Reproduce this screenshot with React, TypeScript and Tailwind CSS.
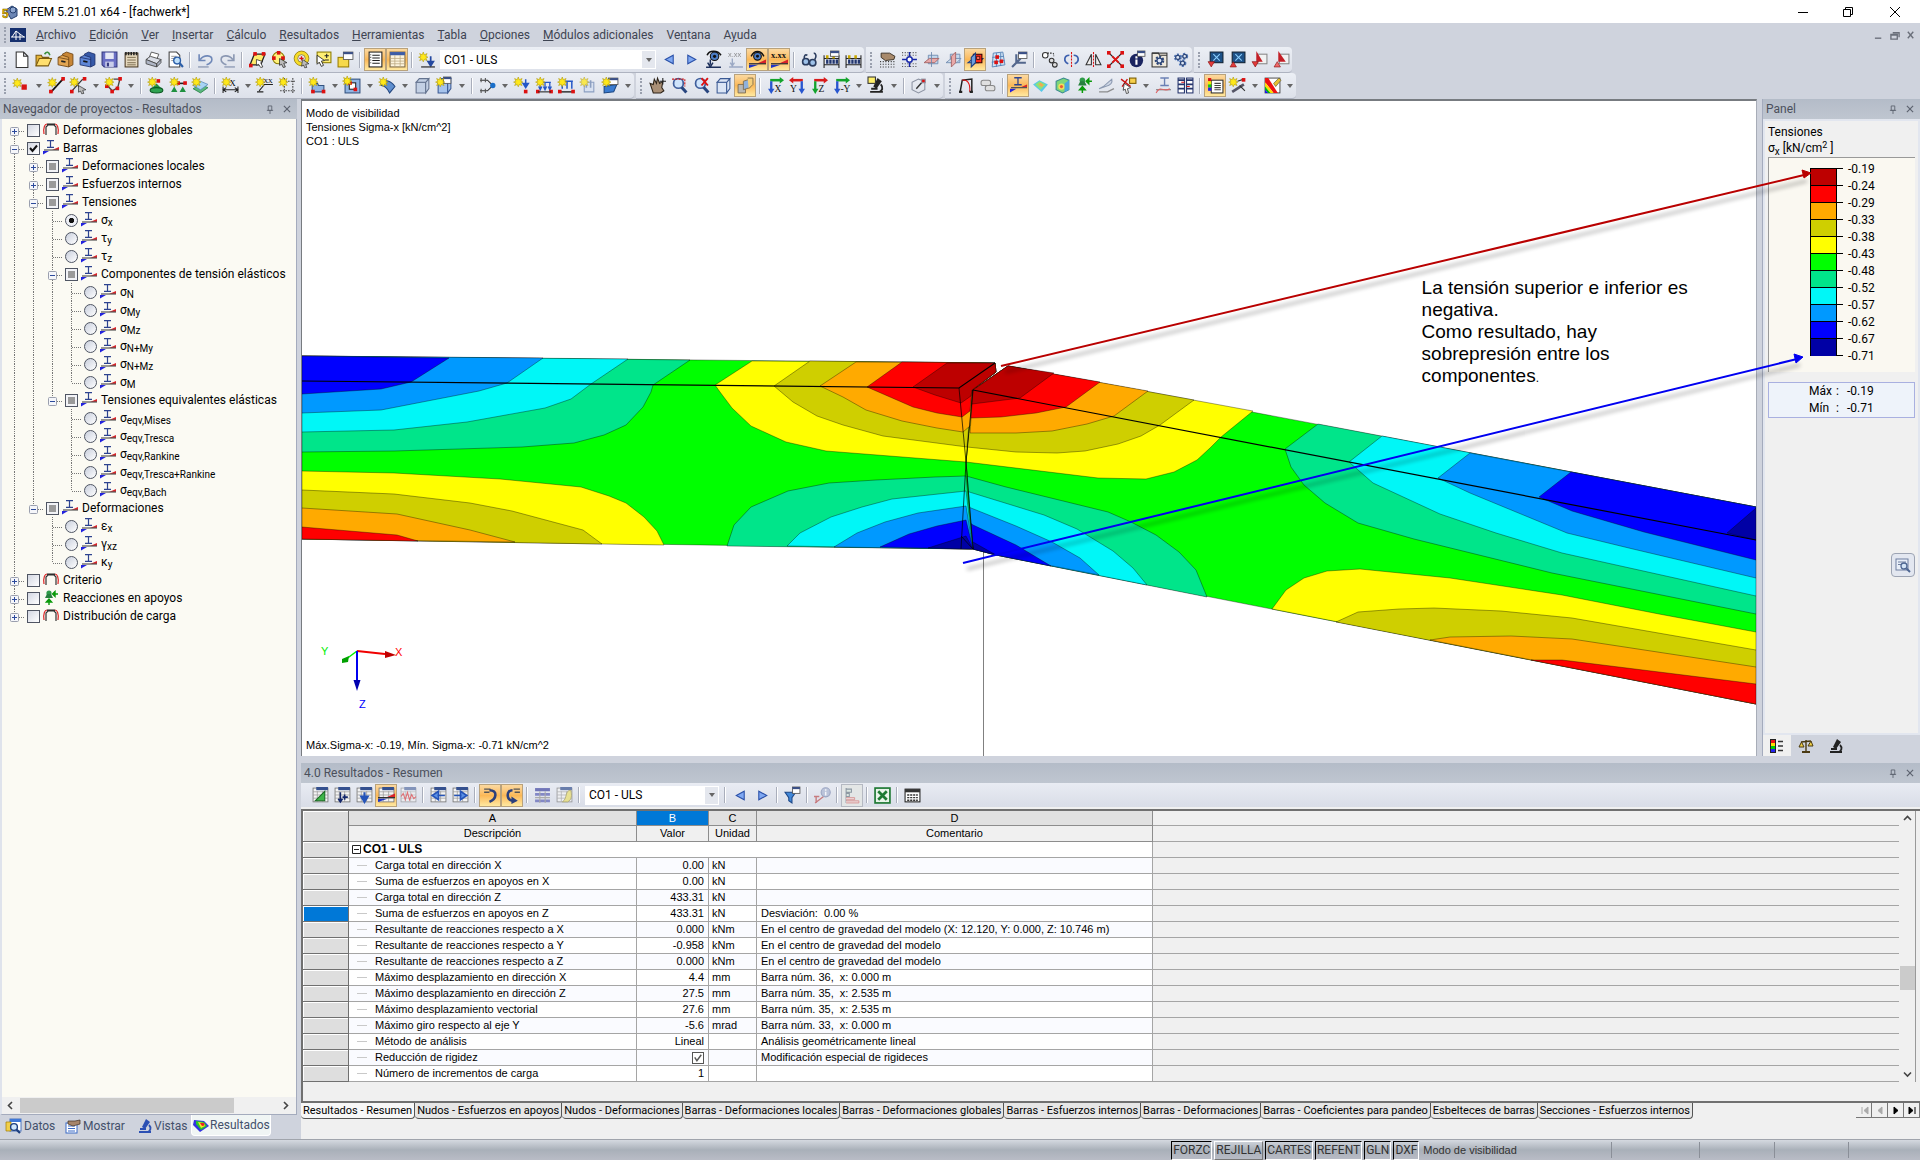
import { Fragment, useState } from 'react'
import type { ReactNode } from 'react'

const C = {
  dark: '#bd0000', red: '#ff0000', orange: '#ffaa00', olive: '#cfcf00', yellow: '#ffff00', green: '#00ff00',
  teal: '#00e58a', cyan: '#00f7f7', sky: '#0099ff', blue: '#0000ff', navy: '#0000a5',
}
const SCALE = [C.dark, C.red, C.orange, C.olive, C.yellow, C.green, C.teal, C.cyan, C.sky, C.blue, C.navy]
const LABELS = ['-0.19', '-0.24', '-0.29', '-0.33', '-0.38', '-0.43', '-0.48', '-0.52', '-0.57', '-0.62', '-0.67', '-0.71']

/* ---------- icons ---------- */

const spark = (x: number, y: number) => (
  <path d={`M${x} ${y - 4}l1 2.6 2.6-1.2-1.2 2.6 2 .8-2 .8 1.2 2.4-2.6-1-1 2.2-1-2.2-2.4 1 1.2-2.4-2.2-.8 2.2-.8-1.2-2.6 2.4 1.2z`} fill="#ffe81a" stroke="#a89200" strokeWidth=".5" />
)
const dot = (x: number, y: number, f = '#dd1111') => <rect x={x} y={y} width="3.4" height="3.4" fill={f} />
const page = (x: number, y: number, w = 7, h = 6) => (
  <g><rect x={x} y={y} width={w} height={h} fill="#fff" stroke="#555" strokeWidth=".8" /><rect x={x} y={y} width={w} height="2" fill="#3a4f86" /></g>
)
const sheet = (
  <g><rect x="1" y="1" width="14" height="13" fill="#f4f4f4" stroke="#777" strokeWidth=".8" /><path d="M1 4.5h14M1 7.5h14M1 10.5h14M5 4v10M10 4v10" stroke="#999" strokeWidth=".7" /><rect x="4" y="0" width="11" height="3" fill="#34508f" /></g>
)
const axes = (l: string, c1: string, c2: string, flip = false) => (
  <g>
    <path d={flip ? 'M13 3H3' : 'M3 3h10'} stroke={c1} strokeWidth="2.4" />
    <path d={flip ? 'M4 0v6L0 3z' : 'M12 0v6l4-3z'} fill={c1} />
    <path d={flip ? 'M12 4v8' : 'M4 4v8'} stroke={c2} strokeWidth="2.2" />
    <path d={flip ? 'M9 11h6l-3 5z' : 'M1 11h6l-3 5z'} fill={c2} />
    <text x={flip ? 1 : 7} y="14" fontSize="9" fontFamily="Liberation Serif, serif" fill="#111">{l}</text>
  </g>
)
const wedge = (y: number) => (
  <g><path d={`M7 ${y}L16 ${y - 4}v4z`} fill="#d8232a" /><path d={`M0 ${y + 1}h9L0 ${y + 4}z`} fill="#1f35c8" /><path d={`M0 ${y}h16`} stroke="#333" strokeWidth="1.2" /></g>
)
const beads = (
  <g><path d="M1 4v12M15 4v12M1 7h14M1 13h14" stroke="#222" fill="none" /><path d="M4 8v4M7 8v4M10 8v4M13 8v4" stroke="#22366f" strokeWidth="2.2" /><path d="M4 4v3M10 4v3" stroke="#c9a800" strokeWidth="2.4" /></g>
)
const cube = (f: string, s = '#3b5a94') => (
  <g fill={f} stroke={s}><path d="M2 5h9v10H2z" /><path d="M2 5l3-3.5h9L11 5zM11 5l3-3.5v9.5L11 15z" /></g>
)
const lens = <g><circle cx="7" cy="6" r="4.6" fill="#cfe4fb" stroke="#3f5e9c" strokeWidth="1.6" /><path d="M10 9.6l4.5 5" stroke="#27457f" strokeWidth="2.8" /></g>
const gear = (x: number, y: number, r: number, f = '#5177b8') => (
  <g><circle cx={x} cy={y} r={r} fill="none" stroke={f} strokeWidth={r} strokeDasharray="1.6 1.1" /><circle cx={x} cy={y} r={r * 0.8} fill="#dfe8f6" stroke="#2d4678" strokeWidth="1.2" /></g>
)
const member = <g><path d="M4 .7h7M4 7.3h7M7.5 .7v6.6" stroke="#2d4390" strokeWidth="1.2" fill="none" /><path d="M9 10L16 7v3z" fill="#d8232a" /><path d="M0 11h6L0 14.5z" fill="#2222dd" /><path d="M1 10h15" stroke="#555" strokeWidth="1.2" /></g>
const frame = <g fill="none"><path d="M3 13V5l2-2h6l2 2v8" stroke="#333" strokeWidth="1.2" /><path d="M1 12C0 5 2 2 4 2M15 12c1-7-1-10-3-10" stroke="#d22" strokeWidth="1.2" /><path d="M4 2.2h8" stroke="#222" strokeWidth="1.4" /></g>
const reaction = <g><circle cx="6" cy="3" r="2.6" fill="#2f9b4a" /><path d="M2 8l2-4h4l2 4z" fill="#27803d" /><path d="M15 4h-4M12 1.6L9.6 4 12 6.4zM6 15v-4M3.4 12L6 9l2.6 3z" stroke="#0a9a0a" strokeWidth="1.4" fill="#0a9a0a" /></g>
const microscope = (f: string) => <g><path d="M9 1l4 3-5 7-3-2z" fill={f} /><path d="M2 14h12M12 7c3 3 1 6-1 7M3 11h6" stroke={f} strokeWidth="1.8" fill="none" /></g>

const ICONS: Record<string, ReactNode> = {
  nuevo: <path d="M3 1h7l4 4v10.5H3zM10 1v4h4" fill="#fff" stroke="#333" />,
  abrir: <g><path d="M1 14V4h5l1 2h6v3" fill="#e5b53a" stroke="#7a5a10" /><path d="M1 14l3-7h11.5l-3 7z" fill="#ffdf6e" stroke="#7a5a10" /><path d="M9 3c2-3 4-2 5 1" stroke="#3c8f3c" strokeWidth="1.5" fill="none" /></g>,
  bloqueMarron: <g stroke="#6d4313" strokeWidth=".8"><path d="M5 3l4-2 6 2v10l-4 2z" fill="#c88636" /><path d="M1 6l4-2 6 2v9l-10-2z" fill="#e2a552" /><path d="M1 6l10 2" /><path d="M4 9.5l4 .8" stroke="#222" strokeWidth="1.5" /></g>,
  bloqueAzul: <g stroke="#1c2f6b" strokeWidth=".8"><path d="M5 3l4-2 6 2v10l-4 2z" fill="#3659a8" /><path d="M1 6l4-2 6 2v9l-10-2z" fill="#5e86d6" /><path d="M1 6l10 2" /><path d="M4 9.5l4 .8" stroke="#111" strokeWidth="1.5" /></g>,
  guardar: <g><path d="M1 1h14v14H3l-2-2z" fill="#6a6fc4" stroke="#35397f" /><rect x="4" y="1.5" width="8" height="6" fill="#e6e8f5" /><rect x="4" y="10" width="8" height="5" fill="#c9cdea" /><rect x="5.5" y="11" width="2" height="3.5" fill="#35397f" /></g>,
  notas: <g><rect x="2" y="2" width="12" height="13" fill="#e5d8bd" stroke="#4c3b24" /><path d="M2 2.5h12" stroke="#222" strokeWidth="3" strokeDasharray="1.5 1" /><path d="M4 6h8M4 8.5h8M4 11h8M4 13h8" stroke="#7d6d51" strokeWidth=".9" /></g>,
  imprimir: <g stroke="#444" strokeWidth=".8"><path d="M4 6l2-5 7 2-2 5z" fill="#fff" /><path d="M1 8l4-3 10 3-4 4z" fill="#d9dde6" /><path d="M1 8v4l10 3v-3zM11 12v3l4-4V8z" fill="#aeb5c5" /></g>,
  vista: <g><path d="M2 1h7l3 3v11H2z" fill="#fff" stroke="#444" /><path d="M4 5h5M4 7h5M4 9h5" stroke="#888" strokeWidth=".8" /><circle cx="9.5" cy="9" r="3.2" fill="#bfe0fa" stroke="#2b5ea8" strokeWidth="1.3" /><path d="M12 11.5l3 3.5" stroke="#2b5ea8" strokeWidth="2" /></g>,
  deshacer: <g fill="none" stroke="#6f88b8" strokeWidth="1.5"><path d="M2 3v6h6M3 8c4-5 11-4 11 0 0 2-2 4-5 5" /><path d="M1 15h10" stroke="#9aa6bd" /></g>,
  rehacer: <g fill="none" stroke="#8a97b2" strokeWidth="1.5"><path d="M14 3v6H8M13 8C9 3 2 4 2 8c0 2 2 4 5 5" /><path d="M5 15h10" stroke="#9aa6bd" /></g>,
  selPlano: <g><path d="M1 13l4-10h10l-4 10z" fill="#ffec6b" stroke="#222" strokeWidth="1.2" />{dot(0, 12)}{dot(4, 1)}{dot(12, 1)}<path d="M7 8l6 2-2 1 2 4-2 .5-2-3-2 1z" fill="#fff" stroke="#222" strokeWidth=".7" /></g>,
  selCirculo: <g><circle cx="7" cy="6.5" r="5.5" fill="#fff27c" stroke="#8a7a00" />{dot(1, 5)}{dot(5.5, 0)}{dot(9.5, 5)}<path d="M8 7l7 4-3 .5 1.5 3.5-2 .5-1.5-3-2 1z" fill="#bbb" stroke="#222" strokeWidth=".7" /></g>,
  selAnillo: <g><circle cx="8" cy="7" r="5.4" fill="none" stroke="#f7dd27" strokeWidth="3" /><circle cx="8" cy="7" r="6.9" fill="none" stroke="#8a7000" strokeWidth=".7" /><circle cx="8" cy="7" r="3.6" fill="none" stroke="#8a7000" strokeWidth=".7" /><path d="M8 5v4M6 7h4" stroke="#d11" strokeWidth="1.2" /><path d="M9 8l6 4-3 .5 1 3-2 .3-1-2.5-2 1z" fill="#bbb" stroke="#222" strokeWidth=".6" /></g>,
  selNota: <g><rect x="2" y="1" width="13" height="10" fill="#ffef73" stroke="#8c7c00" /><path d="M11 2.5v4M9 4.5h4M9 8.5h4" stroke="#222" /><path d="M2 4l7 5-3 .5 2 4-2 1-2-4-2 2z" fill="#fff" stroke="#222" strokeWidth=".8" /></g>,
  selVentana: <g><rect x="1" y="6" width="10" height="9" fill="#f6d94a" stroke="#9a7d00" />{page(6, 1, 9, 7)}</g>,
  navegador: <g><rect x="2" y="1" width="12" height="14" fill="#fff" stroke="#222" /><path d="M5 4h7M5 6.5h7M5 9h7M5 11.5h7" stroke="#222" /><path d="M3.5 3v10" stroke="#555" strokeDasharray="1 1.5" /></g>,
  tablas: <g><rect x="1" y="1" width="14" height="14" fill="#fdf4dd" stroke="#7d6b48" /><rect x="1" y="1" width="14" height="3" fill="#3e5da6" /><path d="M5.5 4v11M10.5 4v11M1 7h14M1 9.5h14M1 12h14" stroke="#b7a47d" strokeWidth=".7" /></g>,
  carga: <g>{spark(4, 5)}<path d="M11 5v7M8.5 10l2.5 4 2.5-4z" stroke="#2348a0" fill="#2348a0" strokeWidth="1.6" /><path d="M2 15h13" stroke="#333" strokeWidth="1.2" /></g>,
  anterior: <path d="M11.5 4v8L4 8z" fill="#7fa8f2" stroke="#2a50a8" />,
  siguiente: <path d="M4.5 4v8L12 8z" fill="#7fa8f2" stroke="#2a50a8" />,
  verCarga: <g><circle cx="9" cy="5" r="4" fill="#4b7cc4" stroke="#111" /><circle cx="9" cy="5" r="1.5" fill="#111" /><path d="M2 4c2-5 10-5 13 0" stroke="#111" fill="none" strokeWidth="1.5" /><path d="M5 8v5M2.5 11L5 15l2.5-4M1 15.3h14" stroke="#1c2f5b" strokeWidth="1.4" fill="none" /></g>,
  valCarga: <g opacity=".65"><text x="1" y="6" fontSize="7" fill="#555" fontFamily="Liberation Sans, sans-serif">x.xx</text><path d="M5 7v6M3 11l2 3 2-3M2 15h13" stroke="#7689ae" strokeWidth="1.3" fill="none" /></g>,
  verRes: <g><circle cx="8" cy="5" r="3.6" fill="#4b7cc4" stroke="#111" /><circle cx="8" cy="5" r="1.4" fill="#111" /><path d="M2 5c3-6 9-6 12 0" stroke="#111" fill="none" strokeWidth="1.4" />{wedge(12)}</g>,
  valRes: <g><text x="0" y="7" fontSize="8" fontWeight="bold" fill="#111" fontFamily="Liberation Serif, serif">x.xx</text>{wedge(12)}</g>,
  gafas: <g fill="none" stroke="#2b3c5e" strokeWidth="1.5"><circle cx="4.5" cy="10" r="3" fill="#9ec1e8" /><circle cx="11" cy="11" r="3" fill="#9ec1e8" /><path d="M3 7c0-3 1-4 3-3M13 8c2-3 1-6-1-6" /></g>,
  abaco: <g>{beads}{page(7, 0, 8, 5)}</g>,
  abaco2: beads,
  rejilla: <g><path d="M1 10h14M1 12.5h14M1 15h14" stroke="#333" strokeDasharray="1 1.5" /><path d="M2 2h8l5 3-1 3-8 1-4-3z" fill="#a88a6c" stroke="#2d2318" strokeWidth=".8" /></g>,
  rejillaPt: <g><path d="M1 1.5h14M1 4h14M1 12h14M1 14.5h14" stroke="#555" strokeDasharray="1 1.5" /><circle cx="8" cy="8" r="2.6" fill="#fff" stroke="#1626a8" strokeWidth="1.4" /><path d="M8 1v4M8 11v4M1 8h4M11 8h4" stroke="#1626a8" strokeWidth="1.3" /></g>,
  planoXY: <g strokeWidth=".8"><path d="M5 4h9v8H5z" fill="#c3d9ee" stroke="#6c88ae" /><path d="M1 11l5-4h9l-4 4z" fill="#e9a9a9" stroke="#a06060" /><path d="M8 1v14" stroke="#6c88ae" /></g>,
  planoYZ: <g strokeWidth=".8"><path d="M5 3h9v8H5z" fill="#c3d9ee" stroke="#6c88ae" /><path d="M1 11l5-4h9l-4 4z" fill="#d2e0ef" stroke="#6c88ae" /><path d="M6 5l4-4v10l-4 4z" fill="#e9a9a9" stroke="#a06060" /></g>,
  planoXZ: <g><path d="M1 11l5-4h9l-4 4z" fill="#a9c9ee" stroke="#1d3f80" /><path d="M6 3h8v8H6z" fill="#ff2a1a" stroke="#300" /><path d="M4 6l4-4v9l-4 4z" fill="#6e9fdc" stroke="#1d3f80" /><path d="M9 5h3v3H9z" fill="#ff6a5a" stroke="#300" strokeWidth=".7" /></g>,
  malla: <g><path d="M4 2l9-1 2 12-12 2zM3 6l11-1M2.5 10.5l12-1.5M7 2v13M11 1.5V14" fill="#cfe3f7" stroke="#5b86b8" strokeWidth=".9" />{dot(6, 4)}{dot(10, 8)}{dot(5, 9)}</g>,
  ejes: <g><path d="M5 3v8l-4 4M5 11h9M5 11l4-4" stroke="#53678d" strokeWidth="2" fill="none" />{page(7, 1, 8, 6)}</g>,
  copiar: <g fill="none" stroke="#333"><circle cx="4" cy="4" r="2.6" fill="#fff" /><circle cx="10" cy="9" r="2.2" fill="#ddd" /><circle cx="13" cy="13" r="2.2" fill="#ddd" /><path d="M6 2h4c2 0 2 1 2 3" strokeDasharray="1.5 1" /></g>,
  girar: <g><path d="M5 12C0 10 1 4 6 4M11 12c5-2 4-8-1-8" fill="none" stroke="#3c5fae" strokeWidth="1.6" /><path d="M8 1v14" stroke="#d11" strokeDasharray="2 1" /></g>,
  simetria: <g fill="none" stroke="#333"><path d="M6 3v10H1zM10 3v10h5z" fill="#eee" /><path d="M8 1v14" stroke="#d11" strokeDasharray="2 1" /></g>,
  cruzar: <g><path d="M2 2l12 12M14 2L2 14" stroke="#222" strokeWidth="1.3" /><path d="M5 5l6 6M11 5l-6 6" stroke="#e01515" strokeWidth="1.8" />{dot(0, 0)}{dot(12.6, 0)}{dot(0, 12.6)}{dot(12.6, 12.6)}</g>,
  info: <g><circle cx="7" cy="9" r="6.3" fill="#1a2460" /><path d="M7 8v5M7 5v2" stroke="#fff" strokeWidth="2" />{page(8, 0, 7, 5)}</g>,
  opciones: <g><rect x="1" y="2" width="14" height="13" fill="#efe9dc" stroke="#333" /><path d="M1 2h6l1 2h7" stroke="#333" fill="none" />{gear(8, 9, 3, '#2d4678')}</g>,
  ajustes: <g>{gear(4.5, 6, 2.5)}{gear(11, 5, 2.2)}{gear(9, 11.5, 2.4)}</g>,
  mod1: <g><rect x="3" y="1" width="12" height="10" fill="#1e5288" stroke="#123" /><path d="M6 3l6 6M12 3L6 9" stroke="#8dd0ff" /><path d="M1 10h6l-3 5z" fill="#e23b3b" stroke="#811" strokeWidth=".6" /></g>,
  mod2: <g><rect x="3" y="1" width="12" height="10" fill="#1e5288" stroke="#123" /><path d="M6 3l6 6M12 3L6 9" stroke="#8dd0ff" /><path d="M1 15h6l-3-5z" fill="#e23b3b" stroke="#811" strokeWidth=".6" /></g>,
  mod3: <g><rect x="6" y="3" width="9" height="9" fill="#f2f2f2" stroke="#888" /><path d="M5 0l6 10H5z" fill="#c41e26" /><path d="M1 10h6l-3 5z" fill="#e23b3b" stroke="#811" strokeWidth=".6" /></g>,
  mod4: <g><rect x="6" y="3" width="9" height="9" fill="#f2f2f2" stroke="#888" /><path d="M5 0l7 10H5z" fill="#c41e26" /><path d="M1 15h6l-3-5z" fill="#f06a6a" stroke="#811" strokeWidth=".6" /></g>,

  nudo: <g>{spark(4, 5)}<rect x="8" y="7" width="5" height="5" fill="#d81414" /></g>,
  linea: <g><path d="M3 14L14 2" stroke="#111" strokeWidth="1.6" />{dot(1, 12)}{dot(12.5, 0)}{spark(4, 4.5)}</g>,
  polilinea: <g><path d="M1 14L12 2M3 2l9 12" stroke="#333" strokeWidth="1.2" /><path d="M8 8l7 4-3 .5 1 3-2 .3-1-2.5-2 1z" fill="#bbb" stroke="#222" strokeWidth=".6" />{dot(0, 12)}{dot(12, 0)}{spark(4, 4)}</g>,
  arco: <g><path d="M2 8l5 5 5-3 2-8H8" stroke="#444" fill="none" strokeWidth="1.3" />{dot(0, 7)}{dot(5, 12)}{dot(10, 9)}{dot(12.5, 0)}{spark(4, 4)}</g>,
  apoyo: <g><path d="M8 6l5 5H3z" fill="#1f9140" /><ellipse cx="8" cy="12.5" rx="6" ry="2.5" fill="#2fa351" stroke="#0b5a22" />{dot(8, 2)}{spark(4, 4)}</g>,
  apoyoLinea: <g><path d="M3 6h11" stroke="#222" strokeWidth="1.5" />{dot(6, 4)}{dot(12.5, 4)}<path d="M4 9l3 5H1zM12 9l3 5H9z" fill="#1f9140" />{spark(4, 4)}</g>,
  apoyoSup: <g><path d="M1 11l7-4 7 3-7 5z" fill="#5bb87c" stroke="#1e7a40" strokeWidth=".7" /><path d="M1 8l7-4 7 3-7 5z" fill="#a8d4f4" stroke="#5184b4" strokeWidth=".7" />{spark(4, 4)}</g>,
  cota: <g><path d="M1 9v6M15 9v6M1 12h14M4 10l-3 2 3 2M12 10l3 2-3 2" stroke="#222" fill="none" /><text x="7" y="8" fontSize="8" fontFamily="Liberation Serif, serif">X</text>{spark(4, 4)}</g>,
  texto: <g><path d="M2 13l5-6h8M0 14h6" stroke="#222" fill="none" /><text x="6" y="6" fontSize="6" fontFamily="Liberation Serif, serif">XX</text>{spark(3, 4)}</g>,
  linGuia: <g><path d="M5 1v14M13 1v14M1 4h14M1 13h14" stroke="#444" strokeDasharray="1.5 1" />{spark(4, 4)}</g>,
  superficie: <g><path d="M3 6h5l1 2h5v6H3z" fill="#90b4e2" stroke="#33527f" />{dot(12, 12)}{dot(2, 12)}{spark(4, 4)}</g>,
  abertura: <g><rect x="1" y="2" width="14" height="13" fill="#90b4e2" stroke="#33527f" /><rect x="5" y="5.5" width="6" height="6" fill="#fff" stroke="#222" />{dot(4, 4)}{dot(9, 10)}{spark(3, 3)}</g>,
  curva: <g><path d="M2 6c4-4 9-3 13 3l-5 6C8 11 5 8 2 8z" fill="#5f8fcf" stroke="#24477f" />{spark(4, 4)}</g>,
  solido: cube('#c3d0e4', '#64738f'),
  solidoNuevo: <g>{cube('#a6c3ec')}{page(7, 0, 7, 6)}{spark(4, 4)}</g>,
  conexion: <g><path d="M1 3h7l5 5-5 5H1" stroke="#333" fill="none" /><path d="M2 1v4M6 1v4M2 11v4M6 11v4" stroke="#555" /><circle cx="13" cy="8" r="2.5" fill="#1b6fc9" /></g>,
  cargaNudo: <g>{spark(4, 4)}<path d="M11 2v6M8.5 6l2.5 4 2.5-4z" stroke="#2557c7" fill="#2557c7" strokeWidth="1.4" />{dot(9.3, 12)}</g>,
  cargaBarra: <g><path d="M3 5h11M4 5v6M8.5 5v6M13 5v6M2.5 9L4 12l1.5-3M7 9l1.5 3L10 9M11.5 9l1.5 3 1.5-3" stroke="#2557c7" fill="none" strokeWidth="1.2" />{dot(0, 12)}{dot(12.5, 12)}<path d="M2 14h12" stroke="#222" />{spark(4, 4)}</g>,
  cargaLinea: <g><path d="M3 4h11M4 4v7M8.5 4v7M13 4v7" stroke="#2557c7" strokeWidth="1.4" /><path d="M2 14h12" stroke="#222" strokeWidth="1.3" />{dot(0, 12)}{dot(12.5, 12)}{spark(4, 4)}</g>,
  cargaSup: <g opacity=".75"><path d="M4 5h9v9H4z" fill="#d5e0f2" stroke="#6f87b2" /><path d="M6 3v7M10 3v7" stroke="#6f87b2" strokeWidth="1.5" />{spark(4, 4)}</g>,
  cargaGen: <g><path d="M2 9l12-2-3 7-9 1z" fill="#3b7cd0" stroke="#1c467f" />{page(6, 1, 9, 6)}{spark(4, 4)}</g>,
  mano: <g><path d="M4 15L1 6l3 1 1-5 2 4 1-5 2 5 3-2-1 6 2 3-3 2z" fill="#a98f76" stroke="#2d2318" /><path d="M13 1v6M10 4h6" stroke="#222" /></g>,
  zoomVent: <g>{lens}<path d="M1 2h12v7" fill="none" stroke="#c11" strokeDasharray="2 1" /></g>,
  zoomX: <g>{lens}<path d="M8 1l6 7M14 1L8 8" stroke="#d11" strokeWidth="1.8" /></g>,
  cubo: cube('#dbe5f5'),
  perspectiva: <g stroke="#7c6a4a" strokeWidth=".8"><path d="M1 7h7v8H1z" fill="#b9b7b3" /><path d="M6 4l6-2v8l-6 2z" fill="#8fb1dc" /><path d="M10 1h5v6l-4 4" fill="#f6cf7b" /></g>,
  vistaX: axes('X', '#13a32c', '#2856cf'),
  vistaY: axes('Y', '#d81b1b', '#2856cf', true),
  vistaZ: axes('Z', '#d81b1b', '#13a32c'),
  vistaMY: axes('-Y', '#13a32c', '#2856cf'),
  microVista: <g>{microscope('#222')}<rect x="0" y="0" width="7" height="6" fill="#fff06a" stroke="#333" /></g>,
  recorte: <g fill="none" stroke="#8d94a3"><path d="M1 5l6-3 6 2v8l-6 3-6-3z" /><path d="M5 11l7-8" stroke="#333" strokeWidth="1.3" />{dot(10, 2)}</g>,
  marco: <g><path d="M2 14L4 3l9-1v12" fill="none" stroke="#222" strokeWidth="1.4" /><path d="M4 3c4-1 8 2 7 11" fill="none" stroke="#d11" /><path d="M1 14h3M11 14h3" stroke="#222" strokeWidth="2" /></g>,
  tubos: <g fill="#e0e0e0" stroke="#888"><rect x="1" y="3" width="9" height="5" rx="2" /><rect x="5" y="8" width="9" height="5" rx="2" /></g>,
  barra: member,
  isoSup: <g><path d="M1 7l6-4 8 4-6 7z" fill="#58c8e8" /><path d="M3 7l4-3 6 3-5 5z" fill="#8be27a" /><path d="M6 7l2-1.5 3 2-2 2z" fill="#f4a850" /></g>,
  isoSol: <g><path d="M2 4l7-3 5 2v9l-6 3-6-3z" fill="#7ed67a" stroke="#3b8a90" /><circle cx="7" cy="9" r="3" fill="#f0e05a" /><circle cx="7" cy="9" r="1.5" fill="#e85a3a" /><path d="M10 6l4-3v9l-4 2z" fill="#4aa6e0" /></g>,
  reaccion: reaction,
  seccion: <g opacity=".8"><path d="M1 11l4-2L13 2c1 4-2 6-6 7z" fill="#c9d3e4" stroke="#7787a3" /><path d="M1 14h8l6-3" stroke="#777" strokeWidth="1.3" fill="none" /></g>,
  seleccion: <g><path d="M1 2l9 7M7 2L2 9" stroke="#c11" strokeWidth="1.3" /><path d="M4 6l6 4-3 1 1 4-2 .5-1-4-2 1z" fill="#fff" stroke="#222" strokeWidth=".7" /><rect x="9" y="1" width="6" height="5" fill="#f6cf4b" stroke="#7a5c00" /></g>,
  distrib: <g opacity=".8"><path d="M5 1h8M5 8h8M9 1v7" stroke="#4d67a6" strokeWidth="1.3" /><path d="M1 12h14" stroke="#555" /><path d="M1 15c4-8 7 0 13-4" stroke="#d44" fill="none" /></g>,
  tablaRes: <g><rect x="1" y="1" width="6" height="14" fill="#fff" stroke="#24346c" /><rect x="9" y="1" width="6" height="14" fill="#fff" stroke="#24346c" /><path d="M1 3h6M9 3h6M1 7h6M9 7h6M1 11h6M9 11h6" stroke="#24346c" strokeWidth="1.6" /><path d="M4 5h3M9 9h3" stroke="#d11" /></g>,
  panelColor: <g><rect x="4" y="3" width="11" height="12" fill="#fff" stroke="#333" /><path d="M7 6h6M7 8h6M7 10h6M7 12h6" stroke="#444" /><rect x="1" y="1" width="3" height="3" fill="#d11" /><rect x="1" y="4" width="3" height="3" fill="#ee0" /><rect x="1" y="7" width="3" height="3" fill="#1c1" /><rect x="1" y="10" width="3" height="3" fill="#22e" /></g>,
  varita: <g><path d="M3 14L14 7" stroke="#556" strokeWidth="2.6" /><path d="M8 4l6-2M10 8l5 5" stroke="#333" />{spark(4, 4)}{dot(12, 1)}</g>,
  colores: <g><rect x="1" y="1" width="14" height="14" fill="#fff" stroke="#333" strokeWidth=".8" /><path d="M1 1h3l9 14H9L1 5z" fill="#e11" /><path d="M1 5l8 10H6L1 9z" fill="#fd0" /><path d="M1 9l5 6H4l-3-3z" fill="#0b0" /><path d="M1 12l3 3H1z" fill="#11e" /><path d="M9 6l5-5 2 2-5 6z" fill="#e8c132" stroke="#553" strokeWidth=".6" /></g>,

  tEditar: <g>{sheet}<path d="M3 13L12 4v9z" fill="#3fb649" stroke="#1b6d25" /></g>,
  tOrden: <g>{sheet}<path d="M6 5v8M4 11l2 3 2-3M10 7v5M8 9.5h5" stroke="#13276b" fill="none" strokeWidth="1.5" /></g>,
  tBajar: <g>{sheet}<path d="M8 5v5M5 9h6l-3 5z" stroke="#2554b8" fill="#2554b8" strokeWidth="2" /></g>,
  tResult: <g>{sheet}{wedge(10)}</g>,
  tGrafico: <g opacity=".55">{sheet}<path d="M1 9l2-3 2 6 2-7 2 7 2-5 2 4 2-2" stroke="#d11" fill="none" /></g>,
  tIzq: <g>{sheet}<path d="M14 8H7M8 4L2 8l6 4z" stroke="#2554b8" fill="#5a90e6" strokeWidth="1.5" /></g>,
  tDer: <g>{sheet}<path d="M2 8h7M8 4l6 4-6 4z" stroke="#2554b8" fill="#5a90e6" strokeWidth="1.5" /></g>,
  tSync1: <g><path d="M2 2h6M2 5h5" stroke="#555" strokeWidth="1.4" /><path d="M7 3c8 0 7 8 0 11" fill="none" stroke="#2b3f7c" strokeWidth="2.4" /></g>,
  tSync2: <g><path d="M9 2h6M10 5h5" stroke="#555" strokeWidth="1.4" /><path d="M8 3C2 3 2 12 8 13" fill="none" stroke="#2b3f7c" strokeWidth="2.4" /><path d="M7 9l6 4-6 3z" fill="#2b3f7c" /></g>,
  tFilas: <g><rect x="1" y="1" width="14" height="3" fill="#7176b8" /><path d="M1 7h14M1 13h14" stroke="#8388c6" strokeWidth="2.6" /><path d="M1 10h14M5.5 4v11M10.5 4v11" stroke="#aaa" /></g>,
  tColor: <g opacity=".7">{sheet}<path d="M14 3c-6 0-3 8-8 11h5c4-2 4-6 3-11z" fill="#ece06c" stroke="#8d8440" strokeWidth=".7" /></g>,
  tFiltro: <g><path d="M1 5h10L7.5 10v5l-3-2v-3z" fill="#4288d8" stroke="#1c4787" />{page(8, 0, 7, 6)}</g>,
  tInfo: <g opacity=".65"><path d="M2 15V9M0 9h5M1 15l8-6" stroke="#b44" fill="none" strokeWidth="1.3" /><circle cx="11" cy="5" r="4.3" fill="#a5b1cf" stroke="#7583ab" /><path d="M11 4.5v3.5M11 2v1.5" stroke="#fff" strokeWidth="1.4" /></g>,
  tHist: <g opacity=".6"><path d="M2 1v14M2 2h5v3H2M2 6h3v3H2" fill="#d9eadf" stroke="#567" /><path d="M2 10h8v2H2M2 13h12v2H2" fill="#f4d4d4" stroke="#c55" strokeWidth=".8" /></g>,
  tExcel: <g><rect x="1" y="1" width="14" height="14" fill="#e9f5ea" stroke="#207a35" strokeWidth="1.6" /><path d="M4 4l8 8M12 4l-8 8" stroke="#1d7a32" strokeWidth="2.6" /></g>,
  tCalc: <g><rect x="1" y="2" width="14" height="12" fill="#fff" stroke="#222" /><rect x="1" y="2" width="14" height="3" fill="#333" /><path d="M3 7.5h10M3 10h10M3 12.5h10" stroke="#333" strokeWidth="1.4" strokeDasharray="2 .8" /></g>,

  datos: <g><rect x="4" y="1" width="11" height="12" fill="#fff" stroke="#4c74bd" /><rect x="4" y="1" width="11" height="3" fill="#3e78d8" /><path d="M0 4h5v9H0z" fill="#f1cf4a" stroke="#a07b00" strokeWidth=".7" /><circle cx="8" cy="9" r="3.4" fill="#cfe6fb" stroke="#1d3f80" strokeWidth="1.4" /><path d="M10.5 11.5l3.5 3.5" stroke="#1d3f80" strokeWidth="2.2" /></g>,
  mostrar: <g><rect x="1" y="5" width="11" height="10" fill="#fff" stroke="#3b6bc6" /><path d="M3 8h7M3 10.5h7M3 13h7" stroke="#3b6bc6" /><path d="M3 3h7l5-1v4l-7 2-5-2z" fill="#a78569" stroke="#402e1f" strokeWidth=".7" /></g>,
  vistas: microscope('#2c50b4'),
  filtro: microscope('#222'),
  resultados: <g><path d="M1 3l10 1 5 5-9 6L0 8z" fill="#3434e0" /><path d="M3 4l8 1 3 4-6 4-5-6z" fill="#28c828" /><path d="M5 5l6 1 1 3-4 2z" fill="#f3e82a" /><path d="M7 6h4l.5 2.5-2.5.5z" fill="#e22" /></g>,
  deform: frame,
  balanza: <g fill="none" stroke="#4a3a12"><path d="M8 2v11M3 4l10-1M4 14h8" strokeWidth="1.4" /><path d="M1 9l2.5-5L6 9zM10 8l3-5 2 5z" fill="#f0cf45" /><path d="M4 14h8" strokeWidth="2" /></g>,
  escala: <g><rect x="1" y="1" width="6" height="14" fill="#222" /><rect x="2" y="2" width="4" height="3" fill="#e11" /><rect x="2" y="5" width="4" height="3" fill="#fd0" /><rect x="2" y="8" width="4" height="3" fill="#0c0" /><rect x="2" y="11" width="4" height="3" fill="#22e" /><path d="M9 3.5h5M9 8h5M9 12.5h5" stroke="#333" strokeWidth="1.6" /></g>,
  buscar: <g><rect x="1" y="2" width="12" height="11" fill="#e8eef8" stroke="#6f7f9f" /><path d="M3 5h8M3 7.5h4" stroke="#6f7f9f" /><circle cx="9" cy="9" r="3" fill="#d4e4f6" stroke="#4d6692" strokeWidth="1.3" /><path d="M11.5 11.5L15 15" stroke="#4d6692" strokeWidth="2" /></g>,
}

function Icon({ name, className = 'size-4' }: { name: string; className?: string }) {
  return <svg viewBox="0 0 16 16" className={`${className} shrink-0 overflow-visible`} aria-hidden="true">{ICONS[name]}</svg>
}

/* ---------- toolbars ---------- */
// '|' separator, '!' suffix pressed, '~' framed, '+' has a drop-down, '=' load case combo

const ROW1 = [
  'nuevo abrir bloqueMarron bloqueAzul guardar notas imprimir vista | deshacer rehacer | selPlano selCirculo selAnillo selNota selVentana | navegador! tablas! | carga = anterior siguiente verCarga valCarga verRes! valRes! | gafas abaco abaco2',
  'rejilla rejillaPt planoXY planoYZ planoXZ! malla ejes | copiar girar simetria cruzar info opciones ajustes',
  'mod1 mod2 mod3 mod4',
]
const ROW2 = [
  'nudo+ linea polilinea+ arco+ | apoyo apoyoLinea apoyoSup | cota+ texto linGuia | superficie+ abertura+ curva+ solido solidoNuevo+ | conexion+ cargaNudo cargaBarra cargaLinea cargaSup cargaGen+',
  'mano zoomVent zoomX cubo perspectiva! | vistaX vistaY vistaZ vistaMY+ microVista+ | recorte+',
  'marco tubos | barra! isoSup isoSol reaccion seccion seleccion+ distrib tablaRes | panelColor! varita+ colores+',
]
const TABLE_BAR = 'tEditar tOrden tBajar tResult! tGrafico | tIzq tDer | tSync1! tSync2! | tFilas tColor | = | anterior siguiente | tFiltro | tInfo | tHist~ | tExcel | tCalc'

function Combo({ wide }: { wide: boolean }) {
  return (
    <div className={`mx-[2px] flex h-[19px] bg-white ${wide ? 'w-[216px]' : 'w-[134px]'}`}>
      <select aria-label="Caso de carga" className="flex-1 appearance-none bg-white pl-1 text-[12px] leading-[18px] text-black outline-none">
        <option>CO1 - ULS</option>
      </select>
      <span className="flex w-[15px] items-center justify-center border border-white bg-[#e4e7ee]"><Caret /></span>
    </div>
  )
}

function Caret() {
  return <svg viewBox="0 0 6 4" className="h-1 w-[6px]"><path d="M0 0h6L3 4z" fill="#666" /></svg>
}

function Tools({ spec, wide = true }: { spec: string; wide?: boolean }) {
  return (
    <>
      {spec.split(' ').map((raw, i) => {
        if (raw === '|') return <span key={i} className="mx-[3px] h-4 w-[2px] shrink-0 border-l border-[#a9aebb] bg-white" />
        if (raw === '=') return <Combo key={i} wide={wide} />
        const name = raw.replace(/[!+~]/, '')
        const look = raw.endsWith('!') ? 'border-[#b9a27c] bg-linear-to-b from-[#fbd9a0] via-[#fbb857] to-[#ffe9a0]' : raw.endsWith('~') ? 'border-[#b5b9c2] bg-[#e3e6e6]' : 'border-transparent'
        return (
          <Fragment key={i}>
            <button type="button" aria-label={name} className={`flex h-[23px] w-[22px] shrink-0 items-center justify-center border ${look}`}><Icon name={name} className="size-[17px]" /></button>
            {raw.endsWith('+') && <button type="button" aria-label={`${name} menú`} className="flex h-[23px] w-[13px] shrink-0 items-center justify-center"><Caret /></button>}
          </Fragment>
        )
      })}
    </>
  )
}

function ToolRow({ groups }: { groups: string[] }) {
  return (
    <div className="flex h-[26px] gap-[2px]">
      {groups.map(g => (
        <div key={g} className="flex items-center rounded-r border-b border-[#aeb3c0] bg-linear-to-b from-[#eceff5] to-[#dde1ea]">
          <span className="ml-1 mr-[3px] h-4 w-[3px] border-l-2 border-dotted border-[#9aa0ae]" />
          <Tools spec={g} />
        </div>
      ))}
    </div>
  )
}

/* ---------- navigator ---------- */

type Node = { l: number; t: string; s?: string; c: 'box' | 'on' | 'part' | 'radio'; e?: '+' | '-'; i?: string }

const TREE: Node[] = [
  { l: 0, t: 'Deformaciones globales', c: 'box', e: '+', i: 'deform' },
  { l: 0, t: 'Barras', c: 'on', e: '-' },
  { l: 1, t: 'Deformaciones locales', c: 'part', e: '+' },
  { l: 1, t: 'Esfuerzos internos', c: 'part', e: '+' },
  { l: 1, t: 'Tensiones', c: 'part', e: '-' },
  { l: 2, t: 'σ', s: 'x', c: 'radio' },
  { l: 2, t: 'τ', s: 'y', c: 'radio' },
  { l: 2, t: 'τ', s: 'z', c: 'radio' },
  { l: 2, t: 'Componentes de tensión elásticos', c: 'part', e: '-' },
  { l: 3, t: 'σ', s: 'N', c: 'radio' },
  { l: 3, t: 'σ', s: 'My', c: 'radio' },
  { l: 3, t: 'σ', s: 'Mz', c: 'radio' },
  { l: 3, t: 'σ', s: 'N+My', c: 'radio' },
  { l: 3, t: 'σ', s: 'N+Mz', c: 'radio' },
  { l: 3, t: 'σ', s: 'M', c: 'radio' },
  { l: 2, t: 'Tensiones equivalentes elásticas', c: 'part', e: '-' },
  { l: 3, t: 'σ', s: 'eqv,Mises', c: 'radio' },
  { l: 3, t: 'σ', s: 'eqv,Tresca', c: 'radio' },
  { l: 3, t: 'σ', s: 'eqv,Rankine', c: 'radio' },
  { l: 3, t: 'σ', s: 'eqv,Tresca+Rankine', c: 'radio' },
  { l: 3, t: 'σ', s: 'eqv,Bach', c: 'radio' },
  { l: 1, t: 'Deformaciones', c: 'part', e: '-' },
  { l: 2, t: 'ε', s: 'x', c: 'radio' },
  { l: 2, t: 'γ', s: 'xz', c: 'radio' },
  { l: 2, t: 'κ', s: 'y', c: 'radio' },
  { l: 0, t: 'Criterio', c: 'box', e: '+', i: 'deform' },
  { l: 0, t: 'Reacciones en apoyos', c: 'box', e: '+', i: 'reaccion' },
  { l: 0, t: 'Distribución de carga', c: 'box', e: '+', i: 'deform' },
]

// does the branch line of column `col` go on below row `i`
const goesOn = (i: number, col: number) => {
  for (let k = i + 1; k < TREE.length; k++) {
    if (TREE[k].l < col) return false
    if (TREE[k].l === col) return true
  }
  return false
}

function Branch({ i, col }: { i: number; col: number }) {
  const n = TREE[i]
  const own = col === n.l
  const down = goesOn(i, col)
  return (
    <svg viewBox="0 0 19 18" className="h-[18px] w-[19px] shrink-0">
      <g stroke="#777" strokeDasharray="1 1" fill="none">
        {(own ? i > 0 : down) && <path d="M9.5 0v9" />}
        {down && <path d="M9.5 9v9" />}
        {own && <path d="M10 10.5h10" />}
      </g>
      {own && n.e && (
        <g><rect x="5.5" y="6.5" width="8" height="8" rx="1" fill="#f5f6fa" stroke="#9a9fae" /><path d={n.e === '+' ? 'M7 10.5h5M9.5 8v5' : 'M7 10.5h5'} stroke="#2c4a9c" /></g>
      )}
    </svg>
  )
}

function TreeRow({ i, picked, onPick }: { i: number; picked: number; onPick: (i: number) => void }) {
  const n = TREE[i]
  const cols = Array.from({ length: n.l }, (_, k) => k)
  return (
    <li className="flex h-[18px] items-center pl-[5px]">
      {cols.map(k => <Branch key={k} i={i} col={k} />)}
      {n.e ? <button type="button" aria-label={n.t} className="flex"><Branch i={i} col={n.l} /></button> : <Branch i={i} col={n.l} />}
      <label className="flex items-center whitespace-nowrap">
        <span className="ml-[3px] grid size-[13px] shrink-0">
          {n.c === 'radio'
            ? <input type="radio" name="res" checked={picked === i} onChange={() => onPick(i)} className={`[grid-area:1/1] size-[13px] appearance-none rounded-full border border-[#4f5563] ${picked === i ? 'bg-[radial-gradient(circle,#111_0_30%,#eef0f6_38%)]' : 'bg-linear-to-br from-[#c9cfdd] to-white'}`} />
            : <input type="checkbox" defaultChecked={n.c === 'on'} className={`[grid-area:1/1] size-[13px] appearance-none border border-[#4f5563] ${n.c === 'part' ? 'bg-[#9a9a9a] shadow-[inset_0_0_0_2px_#f2f3f7]' : 'bg-linear-to-br from-[#d3d7e2] to-white'}`} />}
          {n.c === 'on' && <svg viewBox="0 0 13 13" className="pointer-events-none [grid-area:1/1]"><path d="M3 6l2.5 3L10 3.5" fill="none" stroke="#111" strokeWidth="2" /></svg>}
        </span>
        <Icon name={n.i ?? 'barra'} className="ml-[3px] size-4" />
        <span className="ml-1 text-[12px] leading-[18px]">{n.t}{n.s && <span className="relative top-[2px] text-[10px]">{n.s}</span>}</span>
      </label>
    </li>
  )
}

function PanelTitle({ text }: { text: string }) {
  return (
    <div className="flex h-5 shrink-0 items-center bg-linear-to-b from-[#b4bcc8] to-[#bfc6d0] pl-[3px] pr-[6px] text-[12px] text-[#4b505c]">
      <h2 className="flex-1">{text}</h2>
      <button type="button" aria-label="Fijar" className="mr-[9px]"><svg viewBox="0 0 9 10" className="h-[9px] w-2"><path d="M2.5 1h4v5h-4zM1 6h7M4.5 6v4" fill="none" stroke="#5d6370" /></svg></button>
      <button type="button" aria-label="Cerrar"><svg viewBox="0 0 9 9" className="size-2"><path d="M1 1l7 7M8 1L1 8" stroke="#5d6370" strokeWidth="1.3" /></svg></button>
    </div>
  )
}

function Navigator() {
  const [picked, setPicked] = useState(5)
  return (
    <aside className="flex w-[297px] shrink-0 flex-col">
      <PanelTitle text="Navegador de proyectos - Resultados" />
      <div className="flex flex-1 flex-col border-b border-l-2 border-r border-[#a4abbd] border-l-[#dfe3ec] bg-[#fbfaf3]">
        <ul className="-ml-[2px] flex-1 pt-[2px]">
          {TREE.map((_, i) => <TreeRow key={i} i={i} picked={picked} onPick={setPicked} />)}
        </ul>
        <div className="flex h-[17px] items-center bg-[#f0f0f0]">
          <button type="button" aria-label="Izquierda" className="flex w-[18px] justify-center"><Chevron d="M5 1L1.5 4.5L5 8" /></button>
          <div className="h-[15px] w-[214px] bg-[#cbcbcb]" />
          <button type="button" aria-label="Derecha" className="ml-auto flex w-[18px] justify-center"><Chevron d="M1 1l3.5 3.5L1 8" /></button>
        </div>
      </div>
      <div className="flex h-[24px] items-start gap-1 bg-[#cfd3dd] pl-[6px] text-[12px] text-[#43506b]">
        <button type="button" className="flex h-[21px] w-[55px] items-center gap-[2px]"><Icon name="datos" />Datos</button>
        <button type="button" className="flex h-[21px] w-[68px] items-center gap-[2px]"><Icon name="mostrar" />Mostrar</button>
        <button type="button" className="flex h-[21px] w-[50px] items-center gap-px"><Icon name="vistas" />Vistas</button>
        <button type="button" className="flex h-[21px] w-[80px] items-center gap-px rounded-b-sm border border-t-0 border-white bg-[#f0f5f4] pl-px"><Icon name="resultados" />Resultados</button>
      </div>
    </aside>
  )
}

function Chevron({ d }: { d: string }) {
  return <svg viewBox="0 0 9 9" className="size-[9px]"><path d={d} fill="none" stroke="#444" strokeWidth="1.6" /></svg>
}

/* ---------- model view ---------- */

type Shape = [string, string]

// bands of both beams, painted from the middle outwards
const LEFT: Shape[] = [
  [C.green, 'M302 356L995 363L996 372L972 390L966 462L973 549L302 539Z'],
  [C.teal, 'M302 356L690 360L653 385L651 392L643 407L626 425L604 435L574 443L522 447L394 451L302 452Z'],
  [C.cyan, 'M302 356L628 359L591 384L571 399L545 408L467 422L394 430L302 432Z'],
  [C.sky, 'M302 356L543 358L507 383L479 391L381 410L302 413Z'],
  [C.blue, 'M302 356L449 358L411 382L381 389L302 394Z'],
  [C.yellow, 'M302 471L394 473L500 479L581 487L609 496L626 503L644 517L657 531L664 545L302 539Z'],
  [C.olive, 'M302 490L394 494L470 503L512 511L583 530L602 544L302 539Z'],
  [C.orange, 'M302 508L397 514L470 530L515 542L302 539Z'],
  [C.red, 'M302 527L397 535L418 541L302 539Z'],
  [C.yellow, 'M752 361L995 363L996 372L972 390L966 462L826 451L786 442L751 426L732 408L720 392L715 385Z'],
  [C.olive, 'M810 361L995 363L996 372L972 390L967 447L883 436L843 425L817 416L793 402L774 386Z'],
  [C.orange, 'M856 362L995 363L996 372L972 390L970 426L963 432L937 428L902 421L866 410L843 397L820 386Z'],
  [C.red, 'M902 362L995 363L996 372L972 390L970 411L962 417L937 413L913 407L890 397L867 387Z'],
  [C.dark, 'M947 363L995 363L996 372L972 390L971 396L961 403L935 395L913 387Z'],
  [C.teal, 'M727 546L734 525L751 507L788 491L829 483L876 480L935 477L966 476L973 549Z'],
  [C.cyan, 'M787 546L800 533L831 517L862 507L892 499L966 491L973 549Z'],
  [C.sky, 'M834 547L857 533L885 522L918 513L966 506L973 549Z'],
  [C.blue, 'M880 547L909 534L937 526L966 520L973 549Z'],
  [C.navy, 'M928 548L966 536L973 549Z'],
]
const RIGHT: Shape[] = [
  [C.green, 'M1008 366L1756 507L1756 704L996 555L973 549L966 462L973 390Z'],
  [C.yellow, 'M1008 366L1253 411L1221 437L1210 448L1197 460L1174 472L1146 479L1098 478L966 462L973 390Z'],
  [C.olive, 'M1008 366L1194 400L1160 425L1141 436L1118 444L1085 451L1057 453L1016 452L967 447L973 390Z'],
  [C.orange, 'M1008 366L1148 391L1114 416L1087 424L1052 431L1016 433L970 433L973 390Z'],
  [C.red, 'M1008 366L1100 382L1066 407L1036 413L1001 417L971 418L973 390Z'],
  [C.dark, 'M1008 366L1054 373L1020 398L996 401L972 404L973 390Z'],
  [C.teal, 'M966 476L1006 487L1108 512L1131 522L1156 535L1179 552L1196 570L1207 597L996 555L973 549Z'],
  [C.cyan, 'M966 491L1044 515L1077 529L1113 551L1133 568L1147 585L996 555L973 549Z'],
  [C.sky, 'M966 506L1016 526L1052 542L1080 558L1099 575L996 555L973 549Z'],
  [C.blue, 'M966 520L973 525L1016 545L1051 566L996 555L973 549Z'],
  [C.navy, 'M966 536L973 542L996 555L973 549Z'],
  [C.teal, 'M1318 424L1756 507L1756 614L1552 573L1414 539L1358 523L1325 503L1304 485L1291 467L1285 449Z'],
  [C.cyan, 'M1382 436L1756 507L1756 596L1562 553L1496 533L1440 514L1373 483L1349 462Z'],
  [C.sky, 'M1470 453L1756 507L1756 578L1633 549L1567 533L1470 493L1438 478Z'],
  [C.blue, 'M1571 472L1756 507L1756 560L1644 532L1572 511L1539 497Z'],
  [C.navy, 'M1756 508L1756 540L1727 533Z'],
  [C.yellow, 'M1272 609L1286 590L1304 578L1327 571L1360 569L1450 578L1562 595L1659 614L1756 632L1756 704Z'],
  [C.olive, 'M1336 622L1358 612L1399 609L1434 608L1501 611L1572 618L1756 650L1756 704Z'],
  [C.orange, 'M1430 640L1450 637L1511 636L1572 639L1756 667L1756 704Z'],
  [C.red, 'M1531 660L1562 660L1756 684L1756 704Z'],
]

function ModelView() {
  return (
    <div className="relative min-w-0 flex-1 border-l border-r border-t-2 border-[#777b80] border-r-[#a8adb8] bg-white">
      <svg viewBox="302 101 1454 655" preserveAspectRatio="none" className="absolute inset-0 size-full">
        <path d="M983.5 550V757" stroke="#808080" />
        <g stroke="#000" strokeOpacity=".6" strokeWidth=".6" strokeLinejoin="round">
          {RIGHT.map(([f, d], i) => <path key={i} d={d} fill={f} />)}
          {LEFT.map(([f, d], i) => <path key={i} d={d} fill={f} />)}
        </g>
        <g stroke="#000" fill="none">
          <path d="M302 381L959 388L995 363M973 390L1756 540" strokeWidth="1.2" />
          <path d="M959 388L966 462L961 549M973 390L966 462L973 549M961 536L973 549" strokeWidth=".7" />
        </g>
        <path d="M357 651l28 3" stroke="#f00000" strokeWidth="2" /><path d="M385 651l11 4-11 3z" fill="#c00000" />
        <path d="M357 651l-12 9" stroke="#00f000" strokeWidth="1.5" /><path d="M349 656l-1 6-6 1 0-4z" fill="#00a000" />
        <path d="M357 651v31" stroke="#0000f0" strokeWidth="2" /><path d="M353.5 680h7l-3.5 11z" fill="#0000b0" />
        <g fontFamily="Liberation Sans, sans-serif" fontSize="11"><text x="395" y="656" fill="#f00">X</text><text x="321" y="655" fill="#0e0">Y</text><text x="359" y="708" fill="#00f">Z</text></g>
      </svg>
      <div className="relative flex h-full flex-col pl-1 pt-[5px] font-['Liberation_Sans',Arial,sans-serif] text-[11px] leading-[14px]">
        <p>Modo de visibilidad</p>
        <p>Tensiones Sigma-x [kN/cm^2]</p>
        <p>CO1 : ULS</p>
        <p className="mt-auto pb-1">Máx.Sigma-x: -0.19, Mín. Sigma-x: -0.71 kN/cm^2</p>
      </div>
      <p className="absolute left-[77%] top-[176px] w-[300px] font-['Liberation_Sans',Arial,sans-serif] text-[19px] leading-[22px]">
        La tensión superior e inferior es<br />negativa.<br />Como resultado, hay<br />sobrepresión entre los<br />componentes<span className="text-[12px]">.</span>
      </p>
    </div>
  )
}

function Arrows() {
  return (
    <svg viewBox="301 99 1619 657" preserveAspectRatio="none" className="pointer-events-none absolute inset-0 size-full">
      <defs><filter id="soft" x="-5%" y="-5%" width="110%" height="115%"><feGaussianBlur stdDeviation="2" /></filter></defs>
      <g filter="url(#soft)" stroke="#000" fill="#000" opacity=".3" transform="translate(4 6)">
        <path d="M1001 366L1803 175M963 563L1796 359" strokeWidth="2.5" />
      </g>
      <path d="M1001 366L1804 175" stroke="#b90000" strokeWidth="2" /><path d="M1811 173l-9-3 2 8z" fill="#b90000" stroke="#b90000" />
      <path d="M963 563L1797 359" stroke="#0000f0" strokeWidth="2" /><path d="M1803 357l-9-3 2 9z" fill="#0000f0" stroke="#0000f0" />
    </svg>
  )
}

function ColorPanel() {
  return (
    <aside className="flex w-[158px] shrink-0 flex-col border-l border-[#a4abbd]">
      <PanelTitle text="Panel" />
      <div className="flex flex-1 flex-col border-2 border-[#e2e6ef] bg-[#f0f0f0] px-[3px] text-[12px] leading-4">
        <p className="mt-[3px]">Tensiones</p>
        <p className="h-[17px]">σ<sub className="text-[10px]">x</sub> [kN/cm<sup className="text-[9px]">2</sup> ]</p>
        <div className="flex h-[215px] border-l border-t border-[#999] bg-[#faf8f1] pl-[41px] pt-[10px]">
          <div className="h-[188px] w-[27px] border border-black">
            {SCALE.map(c => <div key={c} className="h-[17px] border-b border-black last:border-b-0" style={{ background: c }} />)}
          </div>
          <ul className="-mt-2">
            {LABELS.map(v => <li key={v} className="flex h-[17px] items-center"><span className="mr-[5px] h-px w-[6px] bg-black" />{v}</li>)}
          </ul>
        </div>
        <dl className="mt-[10px] grid grid-cols-[24px_8px_1fr] gap-x-[3px] border border-[#a9b0e0] bg-[#eef3fa] pl-10 leading-[17px]">
          <dt>Máx</dt><dd>:</dd><dd>-0.19</dd>
          <dt>Mín</dt><dd>:</dd><dd>-0.71</dd>
        </dl>
        <button type="button" aria-label="Buscar" className="ml-auto mt-[135px] flex size-6 shrink-0 items-center justify-center rounded-sm border border-[#9da4b3] bg-[#e3e7f0]"><Icon name="buscar" /></button>
      </div>
      <div className="flex h-[21px] items-center bg-[#cfd3dd]">
        <button type="button" aria-label="Escala de colores" className="flex h-full w-7 items-center justify-center bg-[#f0f0f0]"><Icon name="escala" /></button>
        <button type="button" aria-label="Factores" className="flex w-[30px] justify-center"><Icon name="balanza" /></button>
        <button type="button" aria-label="Filtro" className="flex w-[30px] justify-center"><Icon name="filtro" /></button>
      </div>
    </aside>
  )
}

/* ---------- result table ---------- */

const ROWS: [string, string, string, string][] = [
  ['Carga total en dirección X', '0.00', 'kN', ''],
  ['Suma de esfuerzos en apoyos en X', '0.00', 'kN', ''],
  ['Carga total en dirección Z', '433.31', 'kN', ''],
  ['Suma de esfuerzos en apoyos en Z', '433.31', 'kN', 'Desviación:  0.00 %'],
  ['Resultante de reacciones respecto a X', '0.000', 'kNm', 'En el centro de gravedad del modelo (X: 12.120, Y: 0.000, Z: 10.746 m)'],
  ['Resultante de reacciones respecto a Y', '-0.958', 'kNm', 'En el centro de gravedad del modelo'],
  ['Resultante de reacciones respecto a Z', '0.000', 'kNm', 'En el centro de gravedad del modelo'],
  ['Máximo desplazamiento en dirección X', '4.4', 'mm', 'Barra núm. 36,  x: 0.000 m'],
  ['Máximo desplazamiento en dirección Z', '27.5', 'mm', 'Barra núm. 35,  x: 2.535 m'],
  ['Máximo desplazamiento vectorial', '27.6', 'mm', 'Barra núm. 35,  x: 2.535 m'],
  ['Máximo giro respecto al eje Y', '-5.6', 'mrad', 'Barra núm. 33,  x: 0.000 m'],
  ['Método de análisis', 'Lineal', '', 'Análisis geométricamente lineal'],
  ['Reducción de rigidez', 'check', '', 'Modificación especial de rigideces'],
  ['Número de incrementos de carga', '1', '', ''],
]
const TABS = ['Resultados - Resumen', 'Nudos - Esfuerzos en apoyos', 'Nudos - Deformaciones', 'Barras - Deformaciones locales', 'Barras - Deformaciones globales', 'Barras - Esfuerzos internos', 'Barras - Deformaciones', 'Barras - Coeficientes para pandeo', 'Esbelteces de barras', 'Secciones - Esfuerzos internos']

const HEAD = 'border-b border-r border-[#8d8d8d] p-0 text-center font-normal'
const CELL = 'border-b border-r border-[#a5a5a5] p-0'
const STUB = 'border-b border-r border-[#707070] p-0 shadow-[inset_1px_1px_0_#fff]'

function ResultTable() {
  return (
    <table className="w-full table-fixed border-separate border-spacing-0 whitespace-pre text-[11px] leading-[15px]">
      <colgroup><col className="w-[46px]" /><col className="w-[288px]" /><col className="w-[72px]" /><col className="w-[48px]" /><col className="w-[396px]" /><col /></colgroup>
      <thead>
        <tr className="h-[15px] leading-[14px]">
          <th rowSpan={2} className={`${STUB} bg-[#dedede]`} />
          <th className={`${HEAD} bg-[#e1e1e1]`}>A</th>
          <th className={`${HEAD} bg-[#0078d7] text-white`}>B</th>
          <th className={`${HEAD} bg-[#e1e1e1]`}>C</th>
          <th className={`${HEAD} bg-[#e1e1e1]`}>D</th>
          <td className="border-b border-[#a5a5a5] p-0" />
        </tr>
        <tr className="h-4 bg-[#f0f0f0]">
          <th className={HEAD}>Descripción</th><th className={HEAD}>Valor</th><th className={HEAD}>Unidad</th><th className={HEAD}>Comentario</th>
          <td className="border-b border-[#a5a5a5] p-0" />
        </tr>
      </thead>
      <tbody>
        <tr className="h-4">
          <th className={`${STUB} bg-[#dedede]`} />
          <td colSpan={4} className={`${CELL} bg-white pl-[3px] text-[12px] font-bold`}>
            <span className="flex items-center gap-[2px]"><svg viewBox="0 0 9 9" className="size-[9px]"><path d="M.5 .5h8v8h-8zM2 4.5h5" fill="none" stroke="#222" /></svg>CO1 - ULS</span>
          </td>
          <td className="border-b border-[#a5a5a5] p-0" />
        </tr>
        {ROWS.map(([name, val, unit, note], i) => {
          const bg = i % 2 ? 'bg-white' : 'bg-[#fafbff]'
          return (
            <tr key={name} className="h-4">
              <th className={`${STUB} ${i === 3 ? 'bg-[#0078d7]' : 'bg-[#dedede]'}`} />
              <td className={`${CELL} ${bg}`}>
                <span className="flex items-center"><span className="ml-2 mr-2 h-px w-[10px] bg-[#c9c9c9]" />{name}</span>
              </td>
              <td className={`${CELL} pr-1 text-right ${bg}`}>
                {val === 'check'
                  ? <span className="ml-auto grid size-[12px]"><input type="checkbox" defaultChecked aria-label={name} className="[grid-area:1/1] size-[12px] appearance-none border border-[#555] bg-white" /><svg viewBox="0 0 11 11" className="pointer-events-none [grid-area:1/1]"><path d="M2.5 5l2 3 4-5.5" fill="none" stroke="#555" strokeWidth="1.3" /></svg></span>
                  : val}
              </td>
              <td className={`${CELL} pl-[3px] ${bg}`}>{unit}</td>
              <td className={`${CELL} pl-1 ${bg}`}>{note}</td>
              <td className="border-b border-[#a5a5a5] p-0" />
            </tr>
          )
        })}
      </tbody>
    </table>
  )
}

function Results() {
  const [tab, setTab] = useState(0)
  return (
    <section className="flex shrink-0 flex-col bg-[#f0f0f0]">
      <PanelTitle text="4.0 Resultados - Resumen" />
      <div className="mb-[2px] flex h-6 items-center bg-linear-to-b from-[#e9ecf3] to-[#d9dde7] pl-2"><Tools spec={TABLE_BAR} wide={false} /></div>
      <div className="flex h-[294px] border-b-2 border-l-2 border-t-2 border-[#707070] font-['Liberation_Sans',Arial,sans-serif]">
        <div className="min-w-0 flex-1"><ResultTable /></div>
        <div className="mr-1 flex h-[271px] w-[17px] flex-col items-center border-r border-[#999] py-[3px]">
          <button type="button" aria-label="Arriba"><Chevron d="M1 6l3.5-3.5L8 6" /></button>
          <div className="mb-auto mt-[143px] h-6 w-[15px] bg-[#cbcbcb]" />
          <button type="button" aria-label="Abajo"><Chevron d="M1 2.5L4.5 6L8 2.5" /></button>
        </div>
      </div>
      <div className="flex h-[36px] items-start text-[11px] leading-[14px]">
        {TABS.map((t, i) => (
          <button key={t} type="button" onClick={() => setTab(i)} className={`h-4 whitespace-nowrap rounded-b border-b border-r border-[#555] px-[2px] ${i === tab ? 'bg-[#f7f7f7]' : 'bg-[#e6e6e6]'}`}>{t}</button>
        ))}
        <div className="ml-auto flex">
          {['M4 2v7M10 2v7L6 5.5z', 'M8 2v7L4 5.5z', 'M4 2v7l4-3.5z', 'M3 2v7l4-3.5zM9 2v7'].map((d, i) => (
            <button key={d} type="button" aria-label={`Desplazar ${i + 1}`} className="flex h-[15px] w-4 items-center justify-center border-b border-r border-[#777]"><svg viewBox="0 0 12 11" className="h-[11px] w-3"><path d={d} fill={i < 2 ? '#aaa' : '#000'} stroke={i < 2 ? '#aaa' : '#000'} /></svg></button>
          ))}
        </div>
      </div>
    </section>
  )
}

/* ---------- window ---------- */

// label and index of the underlined letter
const MENU: [string, number][] = [['Archivo', 0], ['Edición', 0], ['Ver', 0], ['Insertar', 0], ['Cálculo', 0], ['Resultados', 0], ['Herramientas', 0], ['Tabla', 0], ['Opciones', 0], ['Módulos adicionales', 0], ['Ventana', 2], ['Ayuda', 1]]

export default function App() {
  return (
    <div className="flex min-h-screen flex-col overflow-hidden bg-[#cfd3dd] font-['Roboto','Noto_Sans',sans-serif] text-[12px] text-black">
      <header>
        <div className="flex h-[23px] items-center bg-white">
          <svg viewBox="0 0 16 16" className="ml-[2px] size-4"><path d="M4 6l6-4 5 3v7l-6 3z" fill="#6c86b4" stroke="#26406f" /><circle cx="11" cy="6" r="3" fill="#8ea6cf" stroke="#26406f" /><text x="0" y="14" fontSize="12" fontWeight="bold" fill="#f2c200" stroke="#5c4a00" strokeWidth=".5" fontFamily="Liberation Sans, sans-serif">5</text></svg>
          <h1 className="ml-[5px] flex-1 text-[12px]">RFEM 5.21.01 x64 - [fachwerk*]</h1>
          <button type="button" aria-label="Minimizar" className="w-[45px]"><svg viewBox="0 0 10 10" className="mx-auto size-[10px]"><path d="M0 5.5h10" stroke="#000" /></svg></button>
          <button type="button" aria-label="Restaurar" className="w-[45px]"><svg viewBox="0 0 10 10" className="mx-auto size-[10px]"><path d="M.5 2.5h7v7h-7zM2.5 2V.5h7v7H8" fill="none" stroke="#000" /></svg></button>
          <button type="button" aria-label="Salir" className="w-[50px]"><svg viewBox="0 0 10 10" className="mx-auto size-[10px]"><path d="M0 0l10 10M10 0L0 10" stroke="#000" /></svg></button>
        </div>
        <nav className="flex h-6 items-center text-[#3e4452]">
          <span className="ml-1 mr-[3px] h-4 w-[3px] border-l-2 border-dotted border-[#9aa0ae]" />
          <svg viewBox="0 0 16 14" className="mr-[3px] h-[14px] w-4"><path d="M0 0h16v14H0z" fill="#16306e" /><path d="M2 9l4-6v9M6 3l8 6M1 9h14M10 6v6" stroke="#fff" fill="none" /></svg>
          {MENU.map(([m, k]) => (
            <button key={m} type="button" className="pl-[7px] pr-[6px]">{m.slice(0, k)}<u>{m[k]}</u>{m.slice(k + 1)}</button>
          ))}
          <span className="ml-auto flex gap-[6px] pr-1">
            {['M1 9h7', 'M3 3h7v5M1 5h7v5H1zM1 5.5h7', 'M2 2l6 7M8 2L2 9'].map((d, i) => (
              <button key={d} type="button" aria-label={`Ventana ${i + 1}`}><svg viewBox="0 0 11 11" className="size-[10px]"><path d={d} fill="none" stroke="#6a6f7a" strokeWidth="1.5" /></svg></button>
            ))}
          </span>
        </nav>
        <ToolRow groups={ROW1} />
        <ToolRow groups={ROW2} />
      </header>
      <main className="flex flex-1 gap-1">
        <Navigator />
        <div className="flex min-w-0 flex-1 flex-col gap-[7px]">
          <div className="relative flex flex-1 gap-[5px]">
            <ModelView />
            <ColorPanel />
            <Arrows />
          </div>
          <Results />
        </div>
      </main>
      <footer className="flex h-[21px] items-center gap-[2px] border-t border-[#a0a4ac] bg-linear-to-b from-[#d5d9e0] via-[#a9b0b9] to-[#b9bcc6] pl-[61%] pr-[71px] text-[#333]">
        {['FORZC', 'REJILLA', 'CARTES', 'REFENT', 'GLN', 'DXF'].map(s => (
          <button key={s} type="button" className={`h-[19px] border px-px text-[12px] leading-[17px] ${s === 'REJILLA' ? 'border-white border-b-[#777] border-r-[#777]' : 'border-black border-b-white border-r-white'}`}>{s}</button>
        ))}
        <span className="ml-[2px] flex-1 font-['Liberation_Sans',Arial,sans-serif] text-[11px]">Modo de visibilidad</span>
        <span className="h-4 w-[86px] border-l border-[#8a8f98]" />
        <span className="h-4 w-[73px] border-l border-[#8a8f98]" />
        <span className="h-4 w-[72px] border-l border-[#8a8f98]" />
        <span className="h-4 w-px border-l border-[#8a8f98]" />
      </footer>
    </div>
  )
}
